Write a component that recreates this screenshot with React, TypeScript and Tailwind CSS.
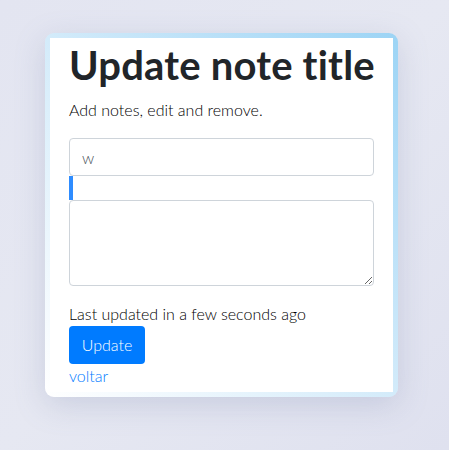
export default function App() {
  return (
    <div className="w-[449px] h-[450px] overflow-hidden bg-gradient-to-br from-[#e3e5f1] via-[#e6e8f2] to-[#dfe1ef] pt-[33px] pl-[45px] font-['Lato',sans-serif]">
      <div className="w-[353px] h-[364px] rounded-[9px] p-[5px] bg-gradient-to-tr from-[#ffffff] via-[#d3ebfa] to-[#9cd4f5] shadow-[0_8px_30px_rgba(120,130,170,0.25)]">
        <div className="w-full h-full bg-white pl-[19px] pr-[19px] flex flex-col">
          <h1 className="text-[40px] leading-[48px] font-bold text-[#212529] mt-[3px] whitespace-nowrap tracking-[0.2px]">
            Update note title
          </h1>
          <p className="text-[16px] leading-[24px] text-black font-light mt-[9px]">
            Add notes, edit and remove.
          </p>
          <input
            defaultValue="w"
            className="mt-[16px] h-[38px] w-full border border-[#ced4da] rounded-[4px] px-[12px] text-[16px] font-light text-[#495057] outline-none"
          />
          <div className="w-[4px] h-[24px] bg-[#2e8cff]" />
          <textarea className="h-[86px] w-full border border-[#ced4da] rounded-[4px] px-[12px] py-[6px] text-[16px] outline-none" />
          <p className="mt-[16px] text-[16px] leading-[24px] text-black font-light whitespace-nowrap">
            Last updated in a few seconds ago
          </p>
          <div>
            <button className="h-[38px] w-[76px] rounded-[4px] bg-[#007bff] text-white text-[16px] font-light">
              Update
            </button>
          </div>
          <a href="#" className="text-[16px] leading-[24px] text-[#007bff] font-light">
            voltar
          </a>
        </div>
      </div>
    </div>
  );
}
